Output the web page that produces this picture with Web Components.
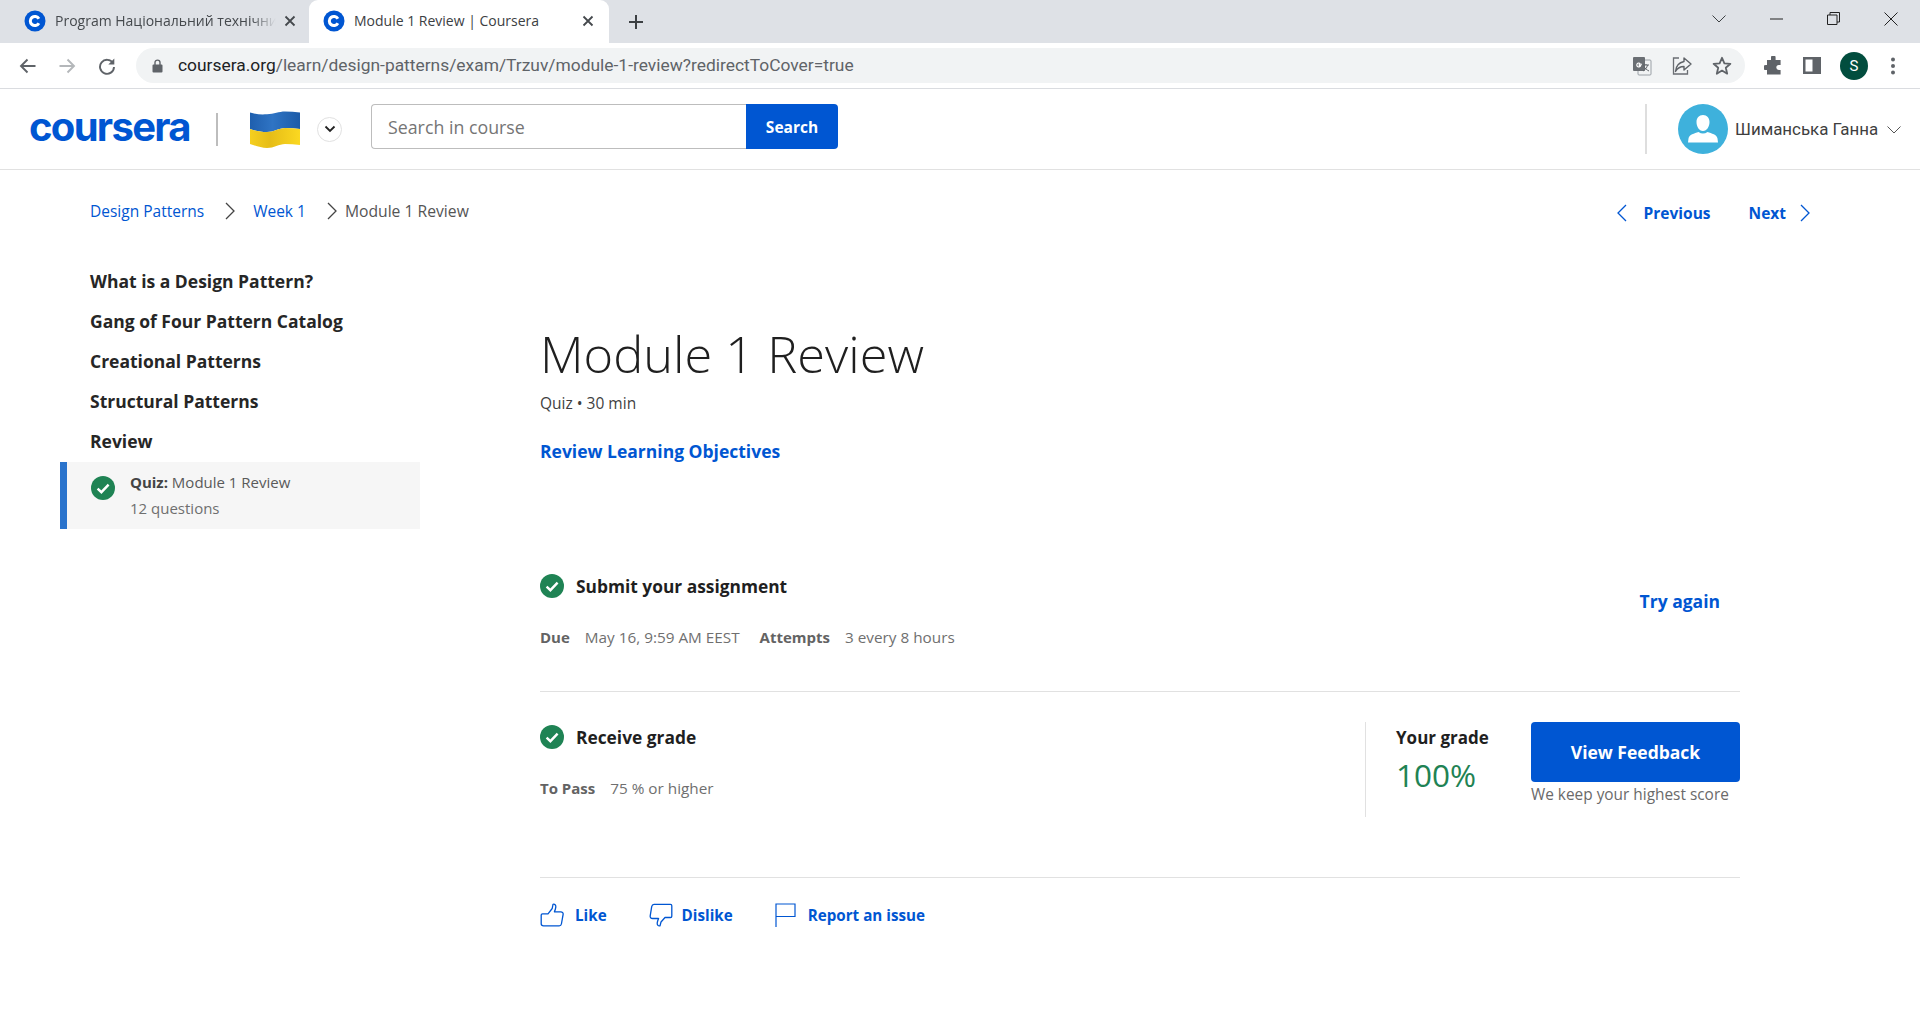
<!DOCTYPE html>
<html lang="en">
<head>
<meta charset="utf-8">
<title>Module 1 Review | Coursera</title>
<style>
  html, body { margin: 0; padding: 0; background: #fff; }
  body { font-family: "Open Sans", "Noto Sans", sans-serif; color: #1f1f1f; height: 1026px; overflow: hidden; }
</style>
</head>
<body>
<browser-chrome></browser-chrome>
<app-header></app-header>
<crumb-bar></crumb-bar>
<page-layout>
  <course-nav slot="nav">
    <nav-group>What is a Design Pattern?</nav-group>
    <nav-group>Gang of Four Pattern Catalog</nav-group>
    <nav-group>Creational Patterns</nav-group>
    <nav-group>Structural Patterns</nav-group>
    <nav-group>Review</nav-group>
    <nav-item></nav-item>
  </course-nav>
  <quiz-cover slot="main"></quiz-cover>
</page-layout>

<script>
const CHECK = (size) => `<svg width="${size}" height="${size}" viewBox="0 0 24 24" style="display:block;flex:none"><circle cx="12" cy="12" r="12" fill="#1f8354"/><path d="M6.6 12.6l3.8 3.6 7.2-7.6" fill="none" stroke="#fff" stroke-width="2.4"/></svg>`;

const COURSERA_C = `<svg width="22" height="22" viewBox="0 0 22 22" style="display:block"><circle cx="11" cy="11" r="10.5" fill="#0056d2"/><path d="M14.9 13.3a4.6 4.6 0 1 1 0-4.6" fill="none" stroke="#fff" stroke-width="3"/></svg>`;

class BrowserChrome extends HTMLElement {
  constructor() {
    super();
    this.attachShadow({ mode: "open" });
    this.shadowRoot.innerHTML = `
    <style>
      :host { display: block; font-family: "Open Sans", "Noto Sans", sans-serif; }
      .strip { height: 43px; background: #dee1e6; display: flex; align-items: center; }
      .tab { width: 300px; height: 43px; box-sizing: border-box; display: flex; align-items: center; padding: 0 15px 2px 14px; font-size: 14px; color: #45494d; flex: none; }
      .tab.first { width: 309px; padding-left: 24px; padding-right: 13px; }
      .tab.on { background: #fff; border-radius: 9px 9px 0 0; color: #3c4043; }
      .tab .fav { margin-right: 9px; flex: none; }
      .tab .name { flex: 1; white-space: nowrap; }
      .tab.first .name { -webkit-mask-image: linear-gradient(to right, #000 88%, transparent 99%); mask-image: linear-gradient(to right, #000 88%, transparent 99%); }
      .tab .x { flex: none; margin-left: 6px; display: block; }
      .plus { margin-left: 19px; display: block; }
      .win { margin-left: auto; display: flex; align-items: center; height: 43px; padding-bottom: 6px; box-sizing: border-box; }
      .win svg { display: block; }
      .tools { height: 45px; background: #fff; border-bottom: 1px solid #dadce0; display: flex; align-items: center; }
      .nav { display: flex; align-items: center; width: 136px; padding-left: 19px; box-sizing: border-box; gap: 21px; flex: none; }
      .omni { width: 1609px; height: 35px; flex: none; background: #f1f3f4; border-radius: 18px; display: flex; align-items: center; box-sizing: border-box; padding-left: 16px; }
      .url { margin-left: 15px; font: 400 17.4px/35px Roboto, sans-serif; color: #5f6368; white-space: nowrap; }
      .url b { font-weight: 400; color: #202124; }
      .omni-r { margin-left: auto; display: flex; align-items: center; gap: 20px; padding-right: 13px; }
      .tools svg { display: block; flex: none; }
      .ext { display: flex; align-items: center; padding-left: 19px; gap: 20px; }
      .avatar { width: 28px; height: 28px; border-radius: 50%; background: #024d3e; color: #fff; font: 400 15px/28px Roboto, sans-serif; text-align: center; margin-left: -1px; }
    </style>
    <div class="strip">
      <div class="tab first"><span class="fav">${COURSERA_C}</span><span class="name">Program Національний технічни</span>
        <svg class="x" width="12" height="12" viewBox="0 0 12 12"><path d="M1.5 1.5l9 9M10.5 1.5l-9 9" stroke="#45494d" stroke-width="1.8"/></svg></div>
      <div class="tab on"><span class="fav">${COURSERA_C}</span><span class="name">Module 1 Review | Coursera</span>
        <svg class="x" width="12" height="12" viewBox="0 0 12 12"><path d="M1.5 1.5l9 9M10.5 1.5l-9 9" stroke="#45494d" stroke-width="1.8"/></svg></div>
      <svg class="plus" width="16" height="16" viewBox="0 0 16 16"><path d="M8 1v14M1 8h14" stroke="#3c4043" stroke-width="2"/></svg>
      <div class="win">
        <svg width="14" height="8" viewBox="0 0 14 8"><path d="M.5.5L7 7 13.5.5" fill="none" stroke="#3c4043" stroke-width="1"/></svg>
        <svg style="margin-left:44px" width="13" height="2" viewBox="0 0 13 2"><path d="M0 1h13" stroke="#222" stroke-width="1"/></svg>
        <svg style="margin-left:44px" width="13" height="13" viewBox="0 0 13 13"><path d="M.5 3h9.5v9.5H.5zM3 3V.5h9.5V10H10" fill="none" stroke="#222" stroke-width="1"/></svg>
        <svg style="margin-left:44px;margin-right:22px" width="14" height="14" viewBox="0 0 14 14"><path d="M.5.5l13 13M13.5.5l-13 13" stroke="#222" stroke-width="1"/></svg>
      </div>
    </div>
    <div class="tools">
      <div class="nav">
        <svg width="18" height="18" viewBox="0 0 18 18"><path d="M16.5 9H2.5M8.5 2.5L2 9l6.5 6.5" fill="none" stroke="#5f6368" stroke-width="1.9"/></svg>
        <svg width="18" height="18" viewBox="0 0 18 18"><path d="M1.5 9h14M9.5 2.5L16 9l-6.5 6.5" fill="none" stroke="#b4b7ba" stroke-width="1.9"/></svg>
        <svg style="margin-left:1px" width="18" height="18" viewBox="0 0 18 18"><path d="M15 6.2A7 7 0 1 0 16 10" fill="none" stroke="#5f6368" stroke-width="1.9"/><path d="M16.3 1.6v6h-6z" fill="#5f6368"/></svg>
      </div>
      <div class="omni">
        <svg width="11" height="14" viewBox="0 0 11 14"><path d="M1.5 5.5h8a1 1 0 0 1 1 1v6a1 1 0 0 1-1 1h-8a1 1 0 0 1-1-1v-6a1 1 0 0 1 1-1z" fill="#5f6368"/><path d="M3 6V3.6a2.5 2.5 0 0 1 5 0V6" fill="none" stroke="#5f6368" stroke-width="1.4"/></svg>
        <span class="url"><b>coursera.org</b>/learn/design-patterns/exam/Trzuv/module-1-review?redirectToCover=true</span>
        <div class="omni-r">
          <svg width="20" height="20" viewBox="0 0 20 20"><rect x="6" y="4" width="13" height="15" rx="1" fill="#f1f3f4" stroke="#9aa0a6"/><rect x="1" y="1" width="12" height="14" rx="1" fill="#6a6e73"/><path d="M10 8.2H7.2v1.4h1.5a2 2 0 1 1-.5-2" fill="none" stroke="#fff" stroke-width="1.1"/><path d="M11 9h6M14 8v1M15.5 9c-.5 3-2.5 5-4.5 6M12 10.5c1 2 3 3.5 5 4.5" fill="none" stroke="#5f6368" stroke-width="1"/></svg>
          <svg width="20" height="20" viewBox="0 0 20 20"><path d="M7 2H1.5v16h14v-4" fill="none" stroke="#6a6e73" stroke-width="1.3"/><path d="M12 2l7 6-7 6v-3.5c-4 0-6.5 1.5-8.5 5C4 10 7 6.5 12 5.5z" fill="none" stroke="#5f6368" stroke-width="1.4" stroke-linejoin="round"/></svg>
          <svg width="20" height="20" viewBox="0 0 20 20"><path d="M10 1.8l2.4 5.5 6 .5-4.6 4 1.4 5.9-5.2-3.100-5.200 3.100 1.400-5.900-4.600-4 6-.5z" fill="none" stroke="#5f6368" stroke-width="1.8" stroke-linejoin="round"/></svg>
        </div>
      </div>
      <div class="ext">
        <svg width="19" height="19" viewBox="0 0 19 19"><path d="M7 1.500a2.300 2.300 0 0 1 4.600 0V4h5v5h-1.800a2.500 2.500 0 0 0 0 5h1.800v4.500H3V14H1.800a2.500 2.500 0 0 1 0-5H3V4h4z" fill="#5f6368"/></svg>
        <svg width="18" height="17" viewBox="0 0 18 17"><path d="M0 0h18v17H0z" fill="#5f6368"/><path d="M2.500 2.500h7v12h-7z" fill="#fff"/></svg>
        <div class="avatar">S</div>
        <svg style="margin-left:3px" width="4" height="18" viewBox="0 0 4 18"><circle cx="2" cy="2.500" r="2" fill="#5f6368"/><circle cx="2" cy="9" r="2" fill="#5f6368"/><circle cx="2" cy="15.500" r="2" fill="#5f6368"/></svg>
      </div>
    </div>`;
  }
}

class AppHeader extends HTMLElement {
  constructor() {
    super();
    this.attachShadow({ mode: "open" });
    this.shadowRoot.innerHTML = `
    <style>
      :host { display: flex; align-items: center; height: 80px; border-bottom: 1px solid #e1e1e1; font-family: "Open Sans", "Noto Sans", sans-serif; }
      .logo { margin-left: 29px; width: 159px; flex: none; font: 700 40px/46px Inter, sans-serif; color: #0056d2; letter-spacing: -1.7px; white-space: nowrap; padding-bottom: 4px; }
      .bar { width: 2px; height: 33px; background: #bdbdbd; margin-left: 28px; flex: none; }
      .flag { margin-left: 32px; flex: none; display: block; margin-top: 1px; }
      .pick { margin-left: 17px; width: 25px; height: 25px; border: 1px solid #e1e1e1; border-radius: 50%; box-sizing: border-box; display: flex; align-items: center; justify-content: center; flex: none; margin-top: 0; }
      form { margin: 0 0 0 29px; display: flex; height: 45px; margin-top: -5px; flex: none; }
      input { width: 375px; height: 45px; box-sizing: border-box; border: 1px solid #bdbdbd; border-right: 0; border-radius: 4px 0 0 4px; padding: 0 16px; font: 400 17.8px "Open Sans", sans-serif; outline: 0; color: #636363; }
      input::placeholder { color: #757575; opacity: 1; }
      button { width: 92px; height: 45px; background: #0056d2; color: #fff; border: 0; border-radius: 0 4px 4px 0; font: 700 15.5px "Open Sans", sans-serif; padding: 0; }
      .right { margin-left: auto; display: flex; align-items: center; }
      .sep { width: 2px; height: 50px; background: #dedede; }
      .pic { margin-left: 31px; width: 50px; height: 50px; display: block; }
      .name { margin: 0 0 0 7px; width: 143px; font: 400 16.9px Roboto, sans-serif; color: #3f3f3f; white-space: nowrap; }
      .chev { margin: 2px 19px 0 9px; display: block; }
    </style>
    <div class="logo">coursera</div>
    <div class="bar"></div>
    <svg class="flag" width="50" height="37" viewBox="0 0 50 37">
      <defs>
        <linearGradient id="b" x1="0" x2="1" y1="0" y2="0"><stop offset="0" stop-color="#1f5fae"/><stop offset=".45" stop-color="#2f74c4"/><stop offset="1" stop-color="#1c5ba8"/></linearGradient>
        <linearGradient id="y" x1="0" x2="1" y1="0" y2="0"><stop offset="0" stop-color="#f5cf1f"/><stop offset=".4" stop-color="#e6bd17"/><stop offset="1" stop-color="#fbd821"/></linearGradient>
      </defs>
      <path d="M0 1.500C6 3.500 11 3.500 17 3.300 24 3 29 .5 35 .5c5 0 10 .5 15 1V18c-5-.5-10-1-15-1-6 0-11 4-18 4-6 0-11-1-17-3z" fill="url(#b)"/>
      <path d="M0 18c6 2 11 3 17 3 7 0 12-4 18-4 5 0 10 .5 15 1v16c-5-.5-10-1-15-1-6 0-11 4-18 4-6 0-11-2-17-4z" fill="url(#y)"/>
    </svg>
    <div class="pick"><svg width="12" height="8" viewBox="0 0 12 8"><path d="M1.500 1.500L6 6l4.500-4.500" fill="none" stroke="#222" stroke-width="1.800"/></svg></div>
    <form onsubmit="return false"><input placeholder="Search in course"><button>Search</button></form>
    <div class="right">
      <div class="sep"></div>
      <svg class="pic" viewBox="0 0 50 50"><circle cx="25" cy="25" r="25" fill="#3eb1dc"/><path d="M25 11c4 0 6.500 3 6.500 7 0 4.500-2.500 9-6.500 9s-6.500-4.500-6.500-9c0-4 2.500-7 6.500-7zM20.500 28c1.500 1 3 1.500 4.500 1.500s3-.5 4.500-1.500c4 1.500 9.500 2.500 10 6.500l.5 4H10l.5-4c.5-4 6-5 10-6.500z" fill="#fff"/></svg>
      <span class="name">Шиманська Ганна</span>
      <svg class="chev" width="14" height="8" viewBox="0 0 14 8"><path d="M.5.5L7 7 13.500.5" fill="none" stroke="#555" stroke-width="1"/></svg>
    </div>`;
  }
}

class CrumbBar extends HTMLElement {
  constructor() {
    super();
    this.attachShadow({ mode: "open" });
    const chev = (d, s) => `<svg width="11" height="18" viewBox="0 0 11 18" style="display:block;flex:none"><path d="${d}" fill="none" stroke="${s}" stroke-width="1.300"/></svg>`;
    this.shadowRoot.innerHTML = `
    <style>
      :host { display: flex; align-items: center; height: 84px; padding: 0 0 0 90px; box-sizing: border-box; font-family: "Open Sans", "Noto Sans", sans-serif; font-size: 15.5px; }
      a { color: #0056d2; text-decoration: none; white-space: nowrap; }
      .trail { display: flex; align-items: center; margin-top: -2px; }
      .now { color: #555; white-space: nowrap; font-size: 15.7px; margin-top: -1px; }
      .pager { margin-left: auto; display: flex; align-items: center; margin: 0 109px 0 auto; padding-top: 1px; font-weight: 700; }
    </style>
    <div class="trail">
      <a href="#">Design Patterns</a>
      <span style="margin:0 17px 0 21px">${chev("M1 1l8 8-8 8", "#444")}</span>
      <a href="#">Week 1</a>
      <span style="margin:0 7px 0 21px">${chev("M1 1l8 8-8 8", "#444")}</span>
      <span class="now">Module 1 Review</span>
    </div>
    <div class="pager">
      ${chev("M10 1L2 9l8 8", "#0056d2")}
      <a href="#" style="margin:0 38px 0 17px">Previous</a>
      <a href="#" style="margin-right:14px">Next</a>
      ${chev("M1 1l8 8-8 8", "#0056d2")}
    </div>`;
  }
}

class PageLayout extends HTMLElement {
  constructor() {
    super();
    this.attachShadow({ mode: "open" });
    this.shadowRoot.innerHTML = `
    <style>
      :host { display: grid; grid-template-columns: 360px 1200px; column-gap: 120px; padding: 7px 0 0 60px; }
    </style>
    <slot name="nav"></slot><slot name="main"></slot>`;
  }
}

class CourseNav extends HTMLElement {
  constructor() {
    super();
    this.attachShadow({ mode: "open" });
    this.shadowRoot.innerHTML = `<style>:host { display: block; }</style><slot></slot>`;
  }
}

class NavGroup extends HTMLElement {
  constructor() {
    super();
    this.attachShadow({ mode: "open" });
    this.shadowRoot.innerHTML = `
    <style>:host { display: block; height: 40px; padding-left: 30px; font: 700 17.5px/41px "Open Sans", sans-serif; color: #262626; white-space: nowrap; }</style><slot></slot>`;
  }
}

class NavItem extends HTMLElement {
  constructor() {
    super();
    this.attachShadow({ mode: "open" });
    this.shadowRoot.innerHTML = `
    <style>
      :host { display: flex; height: 67px; margin-top: 1px; background: #f6f6f6; border-left: 7px solid #2a73cc; box-sizing: border-box; padding: 14px 0 0 24px; font-family: "Open Sans", sans-serif; font-size: 15px; color: #5a5a5a; }
      .txt { margin: -6px 0 0 15px; line-height: 25.5px; }
      b { color: #444; font-weight: 700; }
      .sub { color: #6f6f6f; }
    </style>
    ${CHECK(24)}
    <div class="txt"><div><b>Quiz:</b> Module 1 Review</div><div class="sub">12 questions</div></div>`;
  }
}

class StepHead extends HTMLElement {
  constructor() {
    super();
    this.attachShadow({ mode: "open" });
    this.shadowRoot.innerHTML = `
    <style>
      :host { display: flex; align-items: center; height: 32px; font: 700 17.35px/32px "Open Sans", sans-serif; color: #1f1f1f; gap: 12px; white-space: nowrap; }
    </style>
    ${CHECK(24)}<slot></slot>`;
  }
}

class MetaRow extends HTMLElement {
  constructor() {
    super();
    this.attachShadow({ mode: "open" });
    this.shadowRoot.innerHTML = `
    <style>
      :host { display: flex; height: 24px; font: 400 15.3px/24px "Open Sans", sans-serif; color: #6f6f6f; white-space: nowrap; }
      ::slotted(b) { color: #636363; font-weight: 700; font-size: 15px; margin-right: 15px; }
      ::slotted(span) { margin-right: 20px; }
    </style>
    <slot></slot>`;
  }
}

class QuizCover extends HTMLElement {
  constructor() {
    super();
    this.attachShadow({ mode: "open" });
    this.shadowRoot.innerHTML = `
    <style>
      :host { display: block; padding-top: 63px; font-family: "Open Sans", "Noto Sans", sans-serif; color: #1f1f1f; }
      h1 { margin: 0; height: 60px; font: 300 50.5px/60px "Open Sans", sans-serif; color: #1f1f1f; white-space: nowrap; }
      .kind { margin-top: 7px; font-size: 15.5px; line-height: 24px; color: #3f3f3f; }
      a { color: #0056d2; text-decoration: none; font-weight: 700; white-space: nowrap; }
      .obj { display: block; margin-top: 24px; font-size: 17.5px; line-height: 24px; }
      .submit { margin-top: 107px; display: flex; justify-content: space-between; height: 122px; box-sizing: border-box; border-bottom: 1px solid #e1e1e1; padding-right: 20px; }
      .submit .try { margin-top: 19px; font-size: 17.5px; line-height: 24px; }
      meta-row { margin-top: 23px; }
      .grade { display: flex; height: 186px; border-bottom: 1px solid #e1e1e1; padding-top: 29px; box-sizing: border-box; }
      .left { flex: 1; }
      .score { border-left: 1px solid #e1e1e1; height: 95px; margin-top: 1px; padding-left: 30px; width: 135px; flex: none; }
      .score .lab { font: 700 17px/31px "Open Sans", sans-serif; }
      .score .val { font: 400 31.5px/40px "Open Sans", sans-serif; color: #1f8354; margin-top: 2px; }
      .cta { width: 209px; flex: none; margin-top: 1px; }
      .cta button { display: block; width: 209px; height: 60px; background: #0056d2; color: #fff; border: 0; border-radius: 4px; font: 700 17.5px "Open Sans", sans-serif; padding: 0; }
      .cta div { font-size: 15.4px; line-height: 24px; padding-top: 1px; color: #6a6a6a; white-space: nowrap; }
      .acts { display: flex; align-items: center; height: 73px; font-size: 15.2px; }
      .acts a { display: flex; align-items: center; }
      .acts svg { display: block; flex: none; }
    </style>
    <h1>Module 1 Review</h1>
    <div class="kind">Quiz • 30 min</div>
    <a class="obj" href="#">Review Learning Objectives</a>
    <div class="submit">
      <div>
        <step-head>Submit your assignment</step-head>
        <meta-row><b>Due</b><span>May 16, 9:59 AM EEST</span><b>Attempts</b><span>3 every 8 hours</span></meta-row>
      </div>
      <a class="try" href="#">Try again</a>
    </div>
    <div class="grade">
      <div class="left">
        <step-head>Receive grade</step-head>
        <meta-row><b>To Pass</b><span>75 % or higher</span></meta-row>
      </div>
      <div class="score"><div class="lab">Your grade</div><div class="val">100%</div></div>
      <div class="cta"><button>View Feedback</button><div>We keep your highest score</div></div>
    </div>
    <div class="acts">
      <a href="#">
        <svg width="24" height="24" viewBox="0 0 24 24"><path d="M2.500 10.800H8L12.200 5.500 13 1.300c1.700-.5 3 .8 2.800 2.800-.2 1.700-.8 3.300-1.400 4.700h6.400c1.600 0 2.600 1.200 2.300 2.700l-1.700 9.500c-.2 1.100-1 1.900-2.200 1.900H3.500c-1.500 0-2.300-.8-2.300-2.100V12c0-.7.500-1.200 1.300-1.200z" fill="none" stroke="#0056d2" stroke-width="1.300" stroke-linejoin="round"/></svg>
        <span style="margin-left:11px">Like</span></a>
      <a href="#" style="margin-left:42px">
        <svg width="24" height="24" viewBox="0 0 24 24"><path d="M21.500 14.500H16L12 19l-1 3.800c-1.700.5-3-.8-2.800-2.800.2-1.700.8-3 1.400-4.500H3.500c-1.600 0-2.600-1.200-2.300-2.700L2.700 3.600C3 2.200 3.800 1.400 5 1.400h16.500c1 0 1.300.6 1.300 1.400v10.500c0 .7-.5 1.200-1.300 1.200z" fill="none" stroke="#0056d2" stroke-width="1.300" stroke-linejoin="round"/></svg>
        <span style="margin-left:9px">Dislike</span></a>
      <a href="#" style="margin-left:42px">
        <svg width="21" height="24" viewBox="0 0 21 24"><path d="M1 24V1h19v12.500H1" fill="none" stroke="#0056d2" stroke-width="1.200"/></svg>
        <span style="margin-left:12px">Report an issue</span></a>
    </div>`;
  }
}

customElements.define("browser-chrome", BrowserChrome);
customElements.define("app-header", AppHeader);
customElements.define("crumb-bar", CrumbBar);
customElements.define("page-layout", PageLayout);
customElements.define("course-nav", CourseNav);
customElements.define("nav-group", NavGroup);
customElements.define("nav-item", NavItem);
customElements.define("step-head", StepHead);
customElements.define("meta-row", MetaRow);
customElements.define("quiz-cover", QuizCover);
</script>
</body>
</html>
